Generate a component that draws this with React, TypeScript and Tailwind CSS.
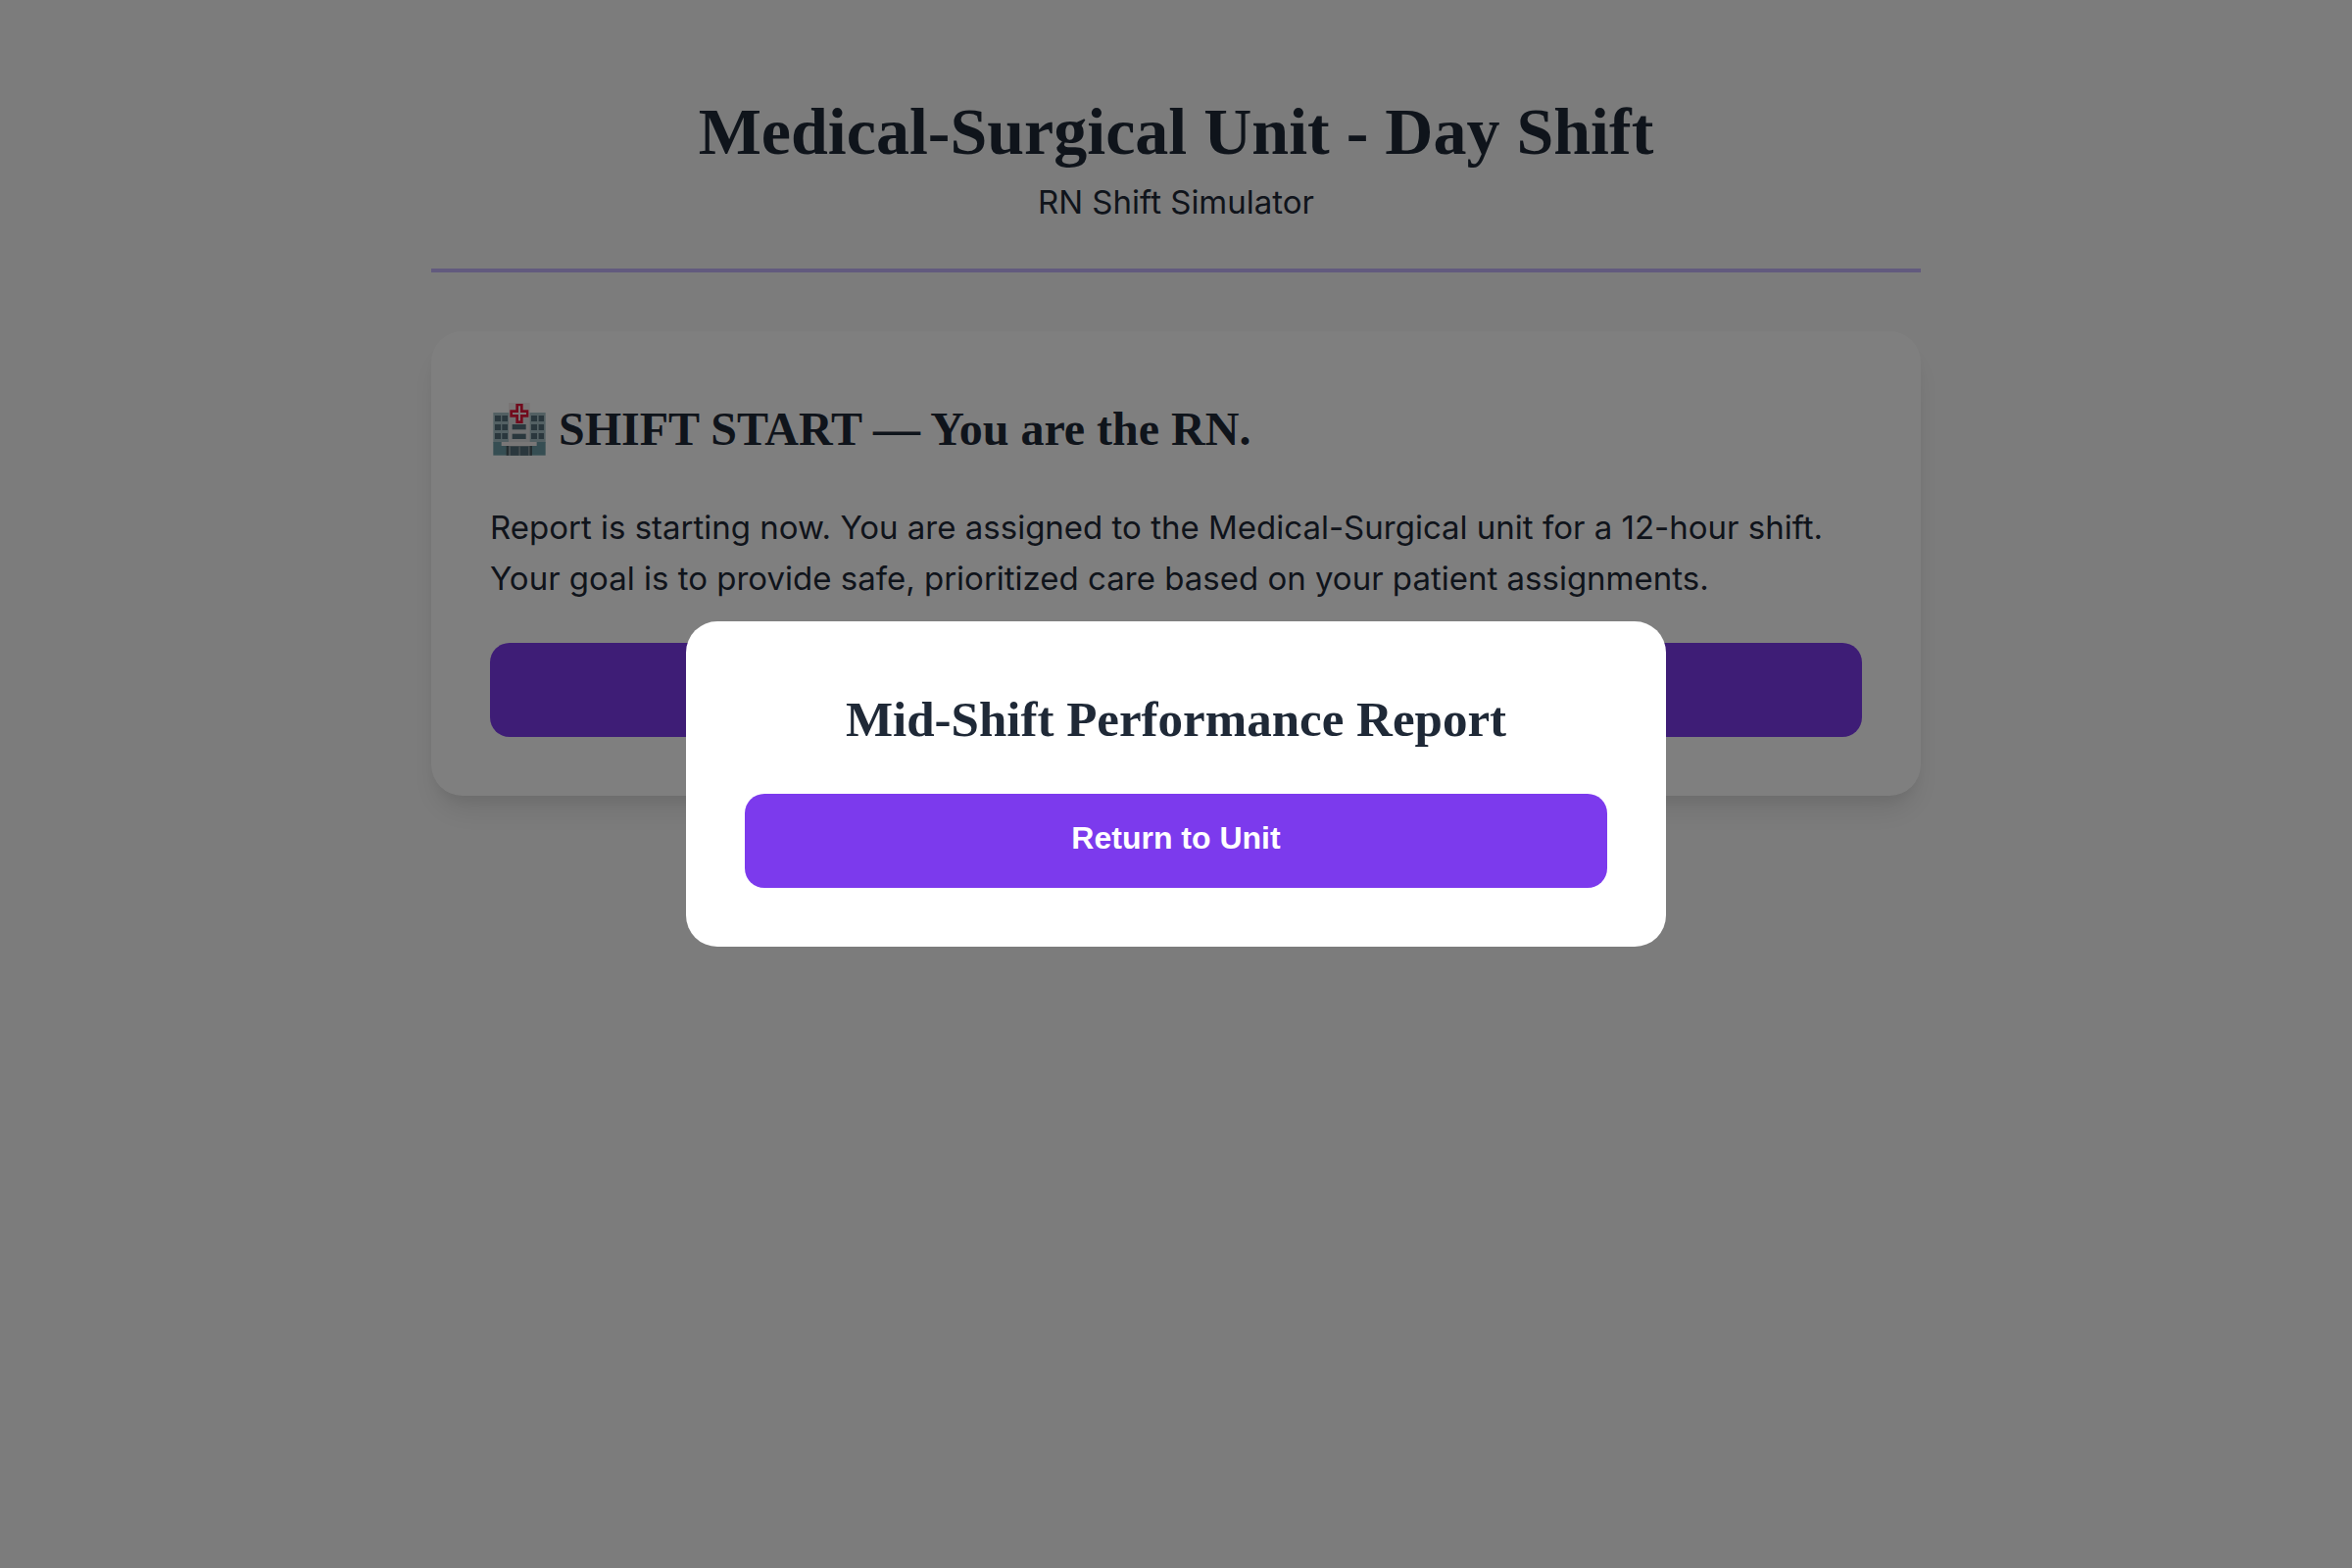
import React, { useState } from "react";
import clsx from "clsx";

const HospitalIcon = () => (
  <svg viewBox="-9 0 178 162" className="w-[60px] h-[54px] shrink-0" aria-hidden="true">
    <rect x="0" y="30" width="160" height="92" fill="#a6c0c6" />
    <rect x="0" y="120" width="160" height="41" fill="#6c9ca6" />
    <rect x="47" y="0" width="65" height="122" fill="#f0e9e9" opacity="0.8" />
    {[39, 66, 93].map((y) => (
      <g key={y} fill="#546e7a">
        <rect x="5" y={y} width="18" height="18" />
        <rect x="27" y={y} width="17" height="18" />
        <rect x="116" y={y} width="18" height="18" />
        <rect x="139" y={y} width="16" height="18" />
      </g>
    ))}
    <rect x="58" y="66" width="42" height="16" fill="#546e7a" />
    <rect x="58" y="95" width="42" height="16" fill="#546e7a" />
    <path d="M69 3h22v19h17v22H91v19H69V44H51V22h18z" fill="#e3173a" />
    <path d="M80 10v45M59 33h42" stroke="#f5e9ec" strokeWidth="6" fill="none" />
    <rect x="40" y="132" width="78" height="29" fill="#8a9aa0" />
    <rect x="40" y="132" width="7" height="29" fill="#46585f" />
    <rect x="112" y="132" width="7" height="29" fill="#46585f" />
    <rect x="53" y="134" width="25" height="27" fill="#546e7a" />
    <rect x="83" y="134" width="24" height="27" fill="#546e7a" />
    <rect x="25" y="120" width="108" height="12" fill="#f2efef" />
  </svg>
);

type PrimaryButtonProps = React.ButtonHTMLAttributes<HTMLButtonElement>;

const PrimaryButton = ({ className, ...props }: PrimaryButtonProps) => (
  <button
    type="button"
    className={clsx(
      "block w-full h-24 pb-1.5 rounded-[20px] bg-[#7c3aed] text-white text-[32px] leading-9 font-bold font-['Liberation_Sans',sans-serif] cursor-pointer",
      className
    )}
    {...props}
  />
);

const App = () => {
  const [reportOpen, setReportOpen] = useState(true);

  return (
    <div className="min-h-screen bg-[#f9f9f9] text-[#1f2937] font-[Inter,sans-serif] text-[33px] leading-[52px]">
      <main className="max-w-[1600px] mx-auto px-10 pt-22">
        <header className="text-center border-b-4 border-[#c4b5fd] pb-[42px] mb-15">
          <h1 className="font-['Liberation_Serif',serif] font-bold text-[68px] leading-[92px]">
            Medical-Surgical Unit - Day Shift
          </h1>
          <p>RN Shift Simulator</p>
        </header>

        <section className="bg-white rounded-[32px] p-15 shadow-[0_20px_30px_-6px_rgba(0,0,0,0.1),0_8px_12px_-4px_rgba(0,0,0,0.05)]">
          <h2 className="flex items-center gap-2.5 font-['Liberation_Serif',serif] font-bold text-[48px] leading-[80px] mb-[34px]">
            <HospitalIcon />
            SHIFT START — You are the RN.
          </h2>
          <p className="mb-10">
            Report is starting now. You are assigned to the Medical-Surgical
            unit for a 12-hour shift. Your goal is to provide safe, prioritized
            care based on your patient assignments.
          </p>
          <PrimaryButton aria-label="Start shift" onClick={() => setReportOpen(true)} />
        </section>
      </main>

      {/* Mid-shift report modal */}
      {reportOpen && (
        <div className="fixed inset-0 z-10 flex items-center justify-center bg-black/50">
          <div
            role="dialog"
            aria-modal="true"
            aria-labelledby="report-title"
            className="w-full max-w-[1000px] bg-white rounded-[32px] p-15"
          >
            <h2
              id="report-title"
              className="text-center font-['Liberation_Serif',serif] font-bold text-[51px] leading-[80px] mb-9"
            >
              Mid-Shift Performance Report
            </h2>
            <PrimaryButton onClick={() => setReportOpen(false)}>
              Return to Unit
            </PrimaryButton>
          </div>
        </div>
      )}
    </div>
  );
};

export default App;
